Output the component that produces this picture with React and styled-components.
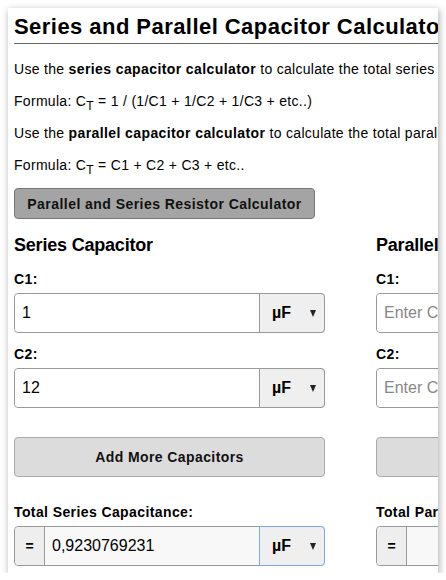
import styled, { createGlobalStyle } from "styled-components";

const GlobalStyle = createGlobalStyle`
  html, body {
    margin: 0;
    padding: 0;
    background: #ffffff;
  }
  body {
    font-family: "Liberation Sans", Arial, sans-serif;
    color: #000;
  }
  * { box-sizing: border-box; }
`;

const columns = [
  {
    title: "Series Capacitor",
    values: ["1", "12"],
    total: "Total Series Capacitance:",
    result: "0,9230769231",
    focused: true,
  },
  {
    title: "Parallel Capacitor",
    values: ["", ""],
    total: "Total Parallel Capacitance:",
    result: "",
    focused: false,
  },
];

function App() {
  return (
    <>
      <GlobalStyle />
      <Window>
        <Page>
          <Title>Series and Parallel Capacitor Calculator</Title>
          <Text>
            Use the <b>series capacitor calculator</b> to calculate the total series capacitance of capacitors connected in series.
          </Text>
          <Text>
            Formula: C<Sub>T</Sub> = 1 / (1/C1 + 1/C2 + 1/C3 + etc..)
          </Text>
          <Text>
            Use the <b>parallel capacitor calculator</b> to calculate the total parallel capacitance of capacitors connected in parallel.
          </Text>
          <Text>
            Formula: C<Sub>T</Sub> = C1 + C2 + C3 + etc..
          </Text>
          <LinkButton>Parallel and Series Resistor Calculator</LinkButton>

          <Columns>
            {columns.map((col) => (
              <Column key={col.title}>
                <ColumnTitle>{col.title}</ColumnTitle>
                {col.values.map((v, i) => (
                  <Field key={i}>
                    <Label>C{i + 1}:</Label>
                    <InputGroup>
                      <ValueInput defaultValue={v} placeholder="Enter Capacitance" />
                      <UnitSelect>
                        <span>µF</span>
                        <Arrow />
                      </UnitSelect>
                    </InputGroup>
                  </Field>
                ))}
                <AddButton>Add More Capacitors</AddButton>
                <Label>{col.total}</Label>
                <InputGroup>
                  <Addon>=</Addon>
                  <ValueInput $readonly defaultValue={col.result} readOnly />
                  <UnitSelect $focused={col.focused}>
                    <span>µF</span>
                    <Arrow />
                  </UnitSelect>
                </InputGroup>
              </Column>
            ))}
          </Columns>
        </Page>
      </Window>
    </>
  );
}

export default App;

const Window = styled.div`
  margin: 8px 0 0 8px;
  width: 430px;
  height: 565px;
  background: #ffffff;
  overflow: hidden;
  box-shadow: 1px 2px 7px rgba(0, 0, 0, 0.35);
`;

const Page = styled.div`
  width: 780px;
  padding: 0 0 0 6px;
`;

const Title = styled.h1`
  margin: 0;
  padding: 6px 0 3px;
  font-size: 22px;
  line-height: 26px;
  font-weight: bold;
  letter-spacing: 0.45px;
  white-space: nowrap;
  border-bottom: 1px solid #666;
`;

const Text = styled.p`
  margin: 16px 0 14px;
  font-size: 14px;
  line-height: 18px;
  letter-spacing: 0.3px;
  white-space: nowrap;
  & + & {
    margin-top: 0;
  }
  b {
    letter-spacing: 0.4px;
  }
`;

const Sub = styled.span`
  font-size: 12px;
  line-height: 0;
  vertical-align: -4px;
`;

const LinkButton = styled.button`
  display: block;
  width: 301px;
  height: 31px;
  margin: 1px 0 0;
  padding: 0;
  background: #a4a4a4;
  border: 1px solid #777;
  border-radius: 4px;
  font-family: inherit;
  font-size: 14px;
  font-weight: bold;
  letter-spacing: 0.45px;
  color: #111;
`;

const Columns = styled.div`
  display: grid;
  grid-template-columns: 311px 311px;
  column-gap: 51px;
  margin-top: 15px;
`;

const Column = styled.div`
  display: flex;
  flex-direction: column;
`;

const ColumnTitle = styled.h2`
  margin: 0 0 15px;
  font-size: 18px;
  line-height: 22px;
  font-weight: bold;
  letter-spacing: -0.2px;
  white-space: nowrap;
`;

const Field = styled.div`
  display: flex;
  flex-direction: column;
  margin-bottom: 13px;
  &:nth-of-type(2) {
    margin-bottom: 29px;
  }
`;

const Label = styled.label`
  display: block;
  font-size: 14px;
  line-height: 16px;
  font-weight: bold;
  letter-spacing: 0.4px;
  margin-bottom: 6px;
  white-space: nowrap;
`;

const InputGroup = styled.div`
  display: flex;
  height: 40px;
  border: 1px solid #999;
  border-radius: 4px;
`;

const ValueInput = styled.input`
  flex: 1;
  min-width: 0;
  border: none;
  padding: 0 7px;
  font-family: inherit;
  font-size: 16px;
  color: #000;
  background: ${(p) => (p.$readonly ? "#f8f8f8" : "#fff")};
  border-radius: ${(p) => (p.$readonly ? "0" : "4px 0 0 4px")};
  outline: none;
  &::placeholder {
    color: #888;
  }
`;

const Addon = styled.div`
  width: 30px;
  display: flex;
  align-items: center;
  justify-content: center;
  background: #eee;
  border-right: 1px solid #999;
  border-radius: 4px 0 0 4px;
  font-size: 14px;
  font-weight: bold;
`;

const UnitSelect = styled.div`
  width: 66px;
  margin: -1px -1px -1px 0;
  display: flex;
  align-items: center;
  justify-content: space-between;
  padding: 0 8px 0 12px;
  background: #efefef;
  border: 1px solid ${(p) => (p.$focused ? "#7fa8ec" : "#999")};
  border-radius: 0 4px 4px 0;
  font-size: 16px;
  font-weight: bold;
`;

const Arrow = styled.span`
  width: 0;
  height: 0;
  margin-top: 1px;
  border-left: 3.5px solid transparent;
  border-right: 3.5px solid transparent;
  border-top: 7px solid #222;
`;

const AddButton = styled.button`
  height: 40px;
  margin: 0 0 27px;
  padding: 0;
  background: #dcdcdc;
  border: 1px solid #aaa;
  border-radius: 4px;
  font-family: inherit;
  font-size: 14px;
  font-weight: bold;
  letter-spacing: 0.4px;
  color: #111;
`;
